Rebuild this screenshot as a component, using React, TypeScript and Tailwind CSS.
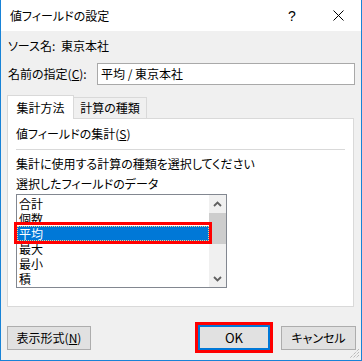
const items = ["合計", "個数", "平均", "最大", "最小", "積"];

const Chevron = ({ up }: { up?: boolean }) => (
  <svg width="9" height="6" viewBox="0 0 9 6" className={up ? "" : "rotate-180"}>
    <path d="M1 5 L4.5 1.5 L8 5" fill="none" stroke="#606060" strokeWidth="1.8" />
  </svg>
);

const App = () => {
  return (
    <div className="relative w-[362px] h-[361px] flex flex-col border-x border-b border-[#1883d7] bg-[#f0f0f0] text-[12px] leading-[16px] text-black font-['Noto_Sans_CJK_JP',sans-serif] [font-feature-settings:'palt']">
      {/* title bar */}
      <div className="h-[31px] shrink-0 bg-white flex items-center pl-[9px]">
        <span>値フィールドの設定</span>
        <div className="ml-auto flex h-full">
          <div className="w-[46px] flex items-center justify-center text-[14px] font-['Liberation_Sans',sans-serif]">?</div>
          <div className="w-[46px] flex items-center justify-center">
            <svg width="11" height="11" viewBox="0 0 11 11">
              <path d="M0.5 0.5 L10.5 10.5 M10.5 0.5 L0.5 10.5" stroke="#000" strokeWidth="1" />
            </svg>
          </div>
        </div>
      </div>

      {/* source name */}
      <div className="mt-[7px] pl-[7px] flex h-[16px]">
        <span className="w-[53px]">ソース名:</span>
        <span>東京本社</span>
      </div>

      {/* name input */}
      <div className="mt-[9px] pl-[7px] flex items-center h-[22px]">
        <span className="w-[89px]">
          名前の指定(<span className="underline">C</span>):
        </span>
        <div className="w-[258px] h-[22px] bg-white border border-[#a9a9a9] flex items-center pl-[3px]">
          平均 / 東京本社
        </div>
      </div>

      {/* tabs */}
      <div className="mt-[10px] pl-[6px] flex items-end h-[23px]">
        <div className="relative z-10 -mb-px w-[67px] h-[24px] bg-white border-t border-x border-[#d9d9d9] flex items-center justify-center">
          集計方法
        </div>
        <div className="w-[73px] h-[21px] border-t border-r border-[#d9d9d9] flex items-center justify-center">
          計算の種類
        </div>
      </div>

      {/* panel */}
      <div className="ml-[6px] w-[347px] h-[189px] bg-white border border-[#d9d9d9] px-[8px] flex flex-col">
        <div className="mt-[7px]">
          値フィールドの集計(<span className="underline">S</span>)
        </div>
        <div className="mt-[7px] w-[329px] h-px bg-[#d9d9d9]" />
        <div className="mt-[6px]">集計に使用する計算の種類を選択してください</div>
        <div className="mt-[4px]">選択したフィールドのデータ</div>
        <div className="relative mt-[2px] w-[211px] h-[94px] border border-[#828790] flex">
          <div className="flex-1 pt-px">
            {items.map((it, i) =>
              i === 2 ? (
                <div key={it} className="h-[15px] bg-[#0078d7] text-white outline outline-1 outline-dotted outline-[#f5d08a] -outline-offset-1 pl-[2px] leading-[15px]">
                  {it}
                </div>
              ) : (
                <div key={it} className="h-[15px] pl-[2px] leading-[15px]">
                  {it}
                </div>
              )
            )}
          </div>
          <div className="w-[17px] bg-[#f0f0f0] flex flex-col">
            <div className="h-[17px] flex items-center justify-center">
              <Chevron up />
            </div>
            <div className="mt-px h-[31px] bg-[#cdcdcd]" />
            <div className="mt-auto h-[17px] flex items-center justify-center">
              <Chevron />
            </div>
          </div>
          <div className="absolute left-[-3px] top-[27px] w-[198px] h-[22px] border-[3px] border-[#ff0000]" />
        </div>
      </div>

      {/* buttons */}
      <div className="mt-[15px] pl-[6px] pr-[5px] flex items-center h-[31px]">
        <button className="w-[84px] h-[24px] bg-[#e1e1e1] border border-[#adadad] flex items-center justify-center">
          表示形式(<span className="underline">N</span>)
        </button>
        <div className="ml-auto mr-[8px] w-[78px] h-[31px] border-[3px] border-[#ff0000]">
          <button className="w-full h-full bg-[#e1e1e1] border-2 border-[#0078d7] flex items-center justify-center text-[13px]">
            OK
          </button>
        </div>
        <button className="w-[75px] h-[24px] bg-[#e1e1e1] border border-[#adadad] flex items-center justify-center">
          キャンセル
        </button>
      </div>

      <svg className="absolute right-[1px] bottom-[1px]" width="10" height="10" viewBox="0 0 10 10">
        <path d="M9 3 L3 9 M9 6 L6 9 M9 0 L0 9" stroke="#a0a0a0" strokeWidth="1" strokeDasharray="1 1" />
      </svg>
    </div>
  );
};

export default App;
